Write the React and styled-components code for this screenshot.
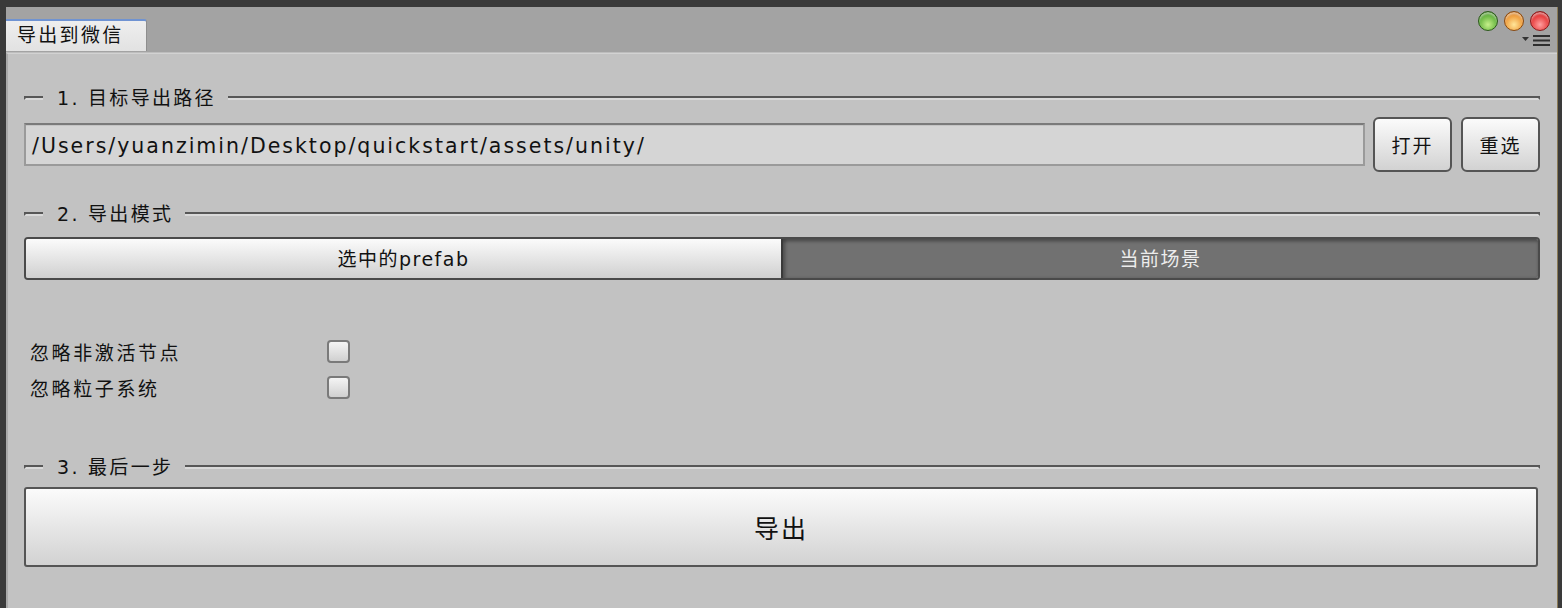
import React from "react";
import styled, { createGlobalStyle } from "styled-components";

const FONT = `"DejaVu Sans", "Noto Sans CJK SC", sans-serif`;

const GlobalStyle = createGlobalStyle`
  html, body { margin: 0; padding: 0; background: #3a3a3a; }
  body { font-family: ${FONT}; }
`;

const Window = styled.div`
  margin: 7px 0 0 6px;
  width: 1552px;
  height: 601px;
  display: flex;
  flex-direction: column;
  background: #c2c2c2;
  border-right: 1px solid #8a7a55;
  box-sizing: border-box;
`;

const TabBar = styled.div`
  height: 46px;
  background: #a3a3a3;
  display: flex;
  justify-content: space-between;
  align-items: flex-end;
  border-bottom: 1px solid #bdbdbd;
  box-sizing: border-box;
`;

const Tab = styled.div`
  width: 141px;
  height: 32px;
  box-sizing: border-box;
  border-top: 2px solid #6f93d2;
  border-right: 1px solid #8e8e8e;
  border-radius: 0 3px 0 0;
  background: linear-gradient(#eeeeee, #e2e2e2);
  font-size: 19px;
  letter-spacing: 2.3px;
  color: #111;
  padding-left: 11px;
  line-height: 29px;
  margin-bottom: 1px;
`;

const WinControls = styled.div`
  display: flex;
  flex-direction: column;
  align-items: flex-end;
  align-self: stretch;
  padding: 4px 7px 0 0;
  gap: 4px;
`;

const Lights = styled.div`
  display: flex;
  gap: 6px;
`;

const Light = styled.div`
  width: 20px;
  height: 20px;
  border-radius: 50%;
  box-sizing: border-box;
  border: 1px solid ${(p) => p.$edge};
  background: radial-gradient(circle at 50% 70%, ${(p) => p.$light} 0%, ${(p) => p.$mid} 55%, ${(p) => p.$dark} 100%);
  box-shadow: inset 0 2px 2px rgba(255,255,255,0.5);
`;

const MenuIcon = styled.svg`
  display: block;
`;

const Content = styled.div`
  flex: 1;
  border-left: 2px solid #a9a9a9;
  border-top: 1px solid #d2d2d2;
  padding: 32px 17px 0 16px;
  display: flex;
  flex-direction: column;
`;

const SectionHeader = styled.div`
  display: flex;
  align-items: center;
  height: 20px;
  margin-top: ${(p) => p.$mt || 0}px;
`;

const Groove = styled.div`
  height: 4px;
  box-sizing: border-box;
  border-top: 2px solid #575757;
  border-bottom: 2px solid #d9d9d9;
  ${(p) => (p.$side === "left" ? "border-left: 2px solid #575757;" : "border-right: 2px solid #575757;")}
  ${(p) => (p.$grow ? "flex: 1;" : `width: ${p.$w}px;`)}
  margin-top: 4px;
`;

const SectionLabel = styled.span`
  font-size: 19px;
  letter-spacing: 2.3px;
  color: #111;
  margin: 0 12px 0 14px;
  white-space: nowrap;
`;

const PathRow = styled.div`
  display: flex;
  align-items: center;
  margin-top: 11px;
  gap: 8px;
`;

const PathField = styled.div`
  flex: 1;
  height: 43px;
  box-sizing: border-box;
  border: 2px solid #9a9a9a;
  border-top-color: #7a7a7a;
  background: #d5d5d5;
  box-shadow: inset 0 1px 0 #c4c4c4;
  font-size: 20.5px;
  letter-spacing: 2px;
  color: #111;
  padding: 2px 0 0 6px;
  line-height: 39px;
  white-space: nowrap;
  overflow: hidden;
`;

const Btn = styled.div`
  width: ${(p) => (p.$block ? "100%" : `${p.$w || 79}px`)};
  height: ${(p) => p.$h || 55}px;
  box-sizing: border-box;
  border: 2px solid #555;
  border-radius: ${(p) => p.$r || 6}px;
  background: linear-gradient(#fbfbfb, #d2d2d2);
  display: flex;
  align-items: center;
  justify-content: center;
  font-size: ${(p) => p.$fs || 19}px;
  letter-spacing: 2px;
  color: #111;
`;

const Buttons = styled.div`
  display: flex;
  gap: 9px;
`;

const Toggle = styled.div`
  margin-top: 15px;
  height: 43px;
  display: flex;
  box-sizing: border-box;
  border: 2px solid #4a4a4a;
  border-radius: 4px;
  overflow: hidden;
`;

const ToggleOpt = styled.div`
  flex: 1;
  display: flex;
  align-items: center;
  justify-content: center;
  font-size: 19px;
  letter-spacing: 1.5px;
  padding-bottom: 2px;
  color: ${(p) => (p.$active ? "#ececec" : "#111")};
  background: ${(p) => (p.$active ? "#717171" : "linear-gradient(#fbfbfb, #d0d0d0)")};
  box-shadow: ${(p) => (p.$active ? "inset 0 3px 3px rgba(0,0,0,0.25), inset 3px 0 3px rgba(0,0,0,0.2)" : "none")};
  & + & { border-left: 2px solid #3a3a3a; }
`;

const Options = styled.div`
  margin-top: 60px;
  display: flex;
  flex-direction: column;
  gap: 13px;
`;

const OptRow = styled.label`
  display: flex;
  align-items: center;
  height: 23px;
  padding-left: 6px;
`;

const OptLabel = styled.span`
  width: 297px;
  font-size: 19px;
  letter-spacing: 2.6px;
  color: #111;
`;

const Check = styled.span`
  width: 23px;
  height: 23px;
  box-sizing: border-box;
  border: 2px solid #7a7a7a;
  border-radius: 4px;
  background: linear-gradient(#f4f4f4, #d0d0d0);
`;

const ExportWrap = styled.div`
  margin-top: 12px;
  padding-right: 2px;
`;

export default function App() {
  return (
    <>
      <GlobalStyle />
      <Window>
        <TabBar>
          <Tab>导出到微信</Tab>
          <WinControls>
            <Lights>
              <Light $edge="#2c5a1a" $light="#c6f08a" $mid="#6cb844" $dark="#2e6a18" />
              <Light $edge="#8a4a10" $light="#ffe69a" $mid="#f0a040" $dark="#b0601a" />
              <Light $edge="#8a1a1a" $light="#ffa0a0" $mid="#e84040" $dark="#a81818" />
            </Lights>
            <MenuIcon width="28" height="12" viewBox="0 0 28 12">
              <path d="M0 2 H7 L3.5 6 Z" fill="#333" />
              <rect x="11" y="0" width="17" height="2" fill="#2e2e2e" />
              <rect x="11" y="4.5" width="17" height="2" fill="#2e2e2e" />
              <rect x="11" y="9" width="17" height="2" fill="#2e2e2e" />
            </MenuIcon>
          </WinControls>
        </TabBar>
        <Content>
          <SectionHeader>
            <Groove $side="left" $w={19} />
            <SectionLabel>1. 目标导出路径</SectionLabel>
            <Groove $side="right" $grow />
          </SectionHeader>
          <PathRow>
            <PathField>/Users/yuanzimin/Desktop/quickstart/assets/unity/</PathField>
            <Buttons>
              <Btn>打开</Btn>
              <Btn>重选</Btn>
            </Buttons>
          </PathRow>
          <SectionHeader $mt={30}>
            <Groove $side="left" $w={19} />
            <SectionLabel>2. 导出模式</SectionLabel>
            <Groove $side="right" $grow />
          </SectionHeader>
          <Toggle>
            <ToggleOpt>选中的prefab</ToggleOpt>
            <ToggleOpt $active>当前场景</ToggleOpt>
          </Toggle>
          <Options>
            <OptRow>
              <OptLabel>忽略非激活节点</OptLabel>
              <Check />
            </OptRow>
            <OptRow>
              <OptLabel>忽略粒子系统</OptLabel>
              <Check />
            </OptRow>
          </Options>
          <SectionHeader $mt={56}>
            <Groove $side="left" $w={19} />
            <SectionLabel>3. 最后一步</SectionLabel>
            <Groove $side="right" $grow />
          </SectionHeader>
          <ExportWrap>
            <Btn $block $h={80} $r={3} $fs={25}>导出</Btn>
          </ExportWrap>
        </Content>
      </Window>
    </>
  );
}
